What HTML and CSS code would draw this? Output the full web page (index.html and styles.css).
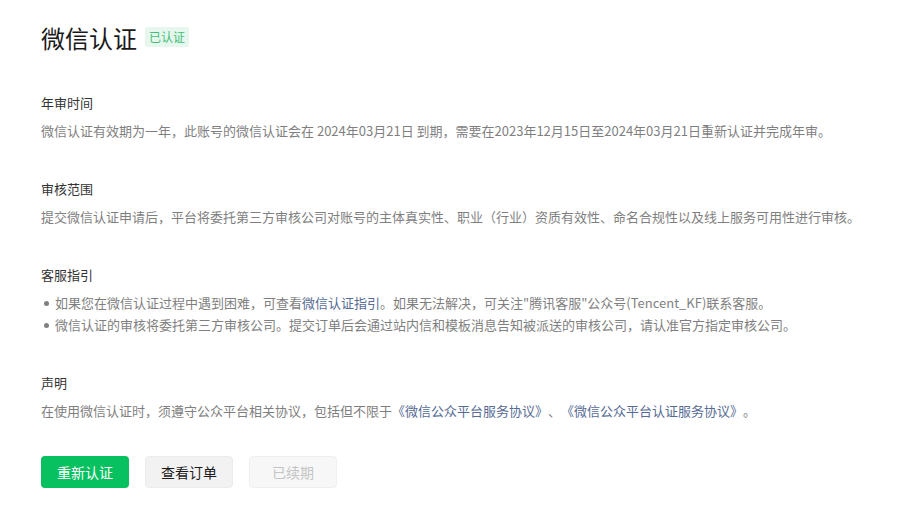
FILE: index.html
```html
<!DOCTYPE html>
<html>
<head>
    <title>微信认证</title>
    <meta charset="UTF-8">
    <meta name="viewport" content="width=device-width, initial-scale=1.0">
    <link rel="stylesheet" href="styles.css">
</head>
<body>
  <div class="container">
    <div class="title-bar">
      <h1>微信认证</h1>
      <span class="badge">已认证</span>
    </div>

    <div class="section">
      <h3>年审时间</h3>
      <p>微信认证有效期为一年，此账号的微信认证会在 2024年03月21日 到期，需要在2023年12月15日至2024年03月21日重新认证并完成年审。</p>
    </div>

    <div class="section">
      <h3>审核范围</h3>
      <p>提交微信认证申请后，平台将委托第三方审核公司对账号的主体真实性、职业（行业）资质有效性、命名合规性以及线上服务可用性进行审核。</p>
    </div>

    <div class="section">
      <h3>客服指引</h3>
      <p class="bullet">如果您在微信认证过程中遇到困难，可查看<a href="#">微信认证指引</a>。如果无法解决，可关注"腾讯客服"公众号(Tencent_KF)联系客服。</p>
      <p class="bullet">微信认证的审核将委托第三方审核公司。提交订单后会通过站内信和模板消息告知被派送的审核公司，请认准官方指定审核公司。</p>
    </div>

    <div class="section">
      <h3>声明</h3>
      <p>在使用微信认证时，须遵守公众平台相关协议，包括但不限于<a href="#">《微信公众平台服务协议》</a>、<a href="#">《微信公众平台认证服务协议》</a>。</p>
    </div>

    <div class="actions">
      <button class="btn btn-primary">重新认证</button>
      <button class="btn btn-default">查看订单</button>
      <button class="btn btn-disabled" disabled>已续期</button>
    </div>
  </div>
</body>
</html>
```

FILE: styles.css
```css
body {
  font-family: "Noto Sans CJK SC", "Noto Sans", sans-serif;
  margin: 0;
  padding: 0;
  background-color: #ffffff;
  color: #333333;
  text-spacing-trim: space-all;
}
.container {
  padding: 20px 41px 0 41px;
}
.title-bar {
  display: flex;
  align-items: center;
  gap: 8px;
  height: 36px;
}
.title-bar h1 {
  margin: 0;
  font-size: 24px;
  font-weight: normal;
  color: #1a1a1a;
  line-height: 36px;
}
.badge {
  background: #e7f7ee;
  color: #3fbf78;
  font-size: 12px;
  line-height: 20px;
  padding: 0 4px;
  border-radius: 2px;
  margin-top: -2px;
}
.section {
  margin-top: 37px;
}
.section h3 {
  margin: 0 0 7px 0;
  font-size: 13px;
  font-weight: normal;
  line-height: 20px;
  color: #333333;
}
.section p {
  margin: 0;
  font-size: 13px;
  line-height: 22px;
  color: #7f7f7f;
  white-space: nowrap;
}
.section a {
  color: #576b95;
  text-decoration: none;
}
.bullet::before {
  content: "";
  display: inline-block;
  width: 5px;
  height: 5px;
  border-radius: 50%;
  background: #808080;
  margin: 0 6px 2px 3px;
  vertical-align: middle;
}
.actions {
  display: flex;
  gap: 16px;
  margin-top: 34px;
}
.btn {
  width: 88px;
  height: 32px;
  border-radius: 4px;
  font-family: inherit;
  font-size: 14px;
  border: 1px solid transparent;
  cursor: pointer;
}
.btn-primary {
  background: #07c160;
  color: #ffffff;
}
.btn-default {
  background: #f2f2f2;
  border-color: #ececec;
  color: #1a1a1a;
}
.btn-disabled {
  background: #f7f7f7;
  border-color: #efefef;
  color: #c4c4c4;
  cursor: default;
}
```
